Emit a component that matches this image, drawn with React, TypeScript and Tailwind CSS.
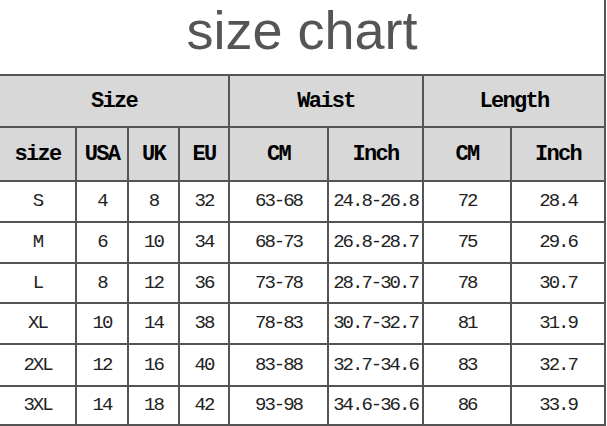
const rows = [
  ['S', '4', '8', '32', '63-68', '24.8-26.8', '72', '28.4'],
  ['M', '6', '10', '34', '68-73', '26.8-28.7', '75', '29.6'],
  ['L', '8', '12', '36', '73-78', '28.7-30.7', '78', '30.7'],
  ['XL', '10', '14', '38', '78-83', '30.7-32.7', '81', '31.9'],
  ['2XL', '12', '16', '40', '83-88', '32.7-34.6', '83', '32.7'],
  ['3XL', '14', '18', '42', '93-98', '34.6-36.6', '86', '33.9'],
];

const rowHeights = ['h-[41px]', 'h-[41px]', 'h-[40px]', 'h-[41px]', 'h-[42px]', 'h-[39px]'];

const widths = [76, 52, 51, 50, 99, 95, 88, 94];

const headCell = 'border-2 border-[#555] text-center align-middle text-[22px] font-bold tracking-[-1.7px] text-black';
const dataCell = 'border-2 border-[#555] text-center align-middle text-[19px] tracking-[-2px] text-[#222]';

const App = () => {
  return (
    <div className="w-[607px] h-[426px] bg-white overflow-hidden">
      <div className="w-[606px] h-[74px] border-r-2 border-[#555] pt-[1px]">
        <div className="text-center text-[54px] leading-[58px] text-[#555] font-['Liberation_Sans',Arial,sans-serif]">
          size chart
        </div>
      </div>
      <table className="w-[606px] table-fixed border-collapse font-['Liberation_Mono',monospace]">
        <colgroup>
          {widths.map((w, i) => (
            <col key={i} style={{ width: w }} />
          ))}
        </colgroup>
        <tbody>
          <tr className="h-[52px] bg-[#d8d8d8]">
            <td colSpan={4} className={`${headCell} border-l-0`}>Size</td>
            <td colSpan={2} className={headCell}>Waist</td>
            <td colSpan={2} className={headCell}>Length</td>
          </tr>
          <tr className="h-[54px] bg-[#d8d8d8]">
            {['size', 'USA', 'UK', 'EU', 'CM', 'Inch', 'CM', 'Inch'].map((h, i) => (
              <td key={i} className={`${headCell} ${i === 0 ? 'border-l-0' : ''}`}>{h}</td>
            ))}
          </tr>
          {rows.map((r, ri) => (
            <tr key={ri} className={rowHeights[ri]}>
              {r.map((c, ci) => (
                <td key={ci} className={`${dataCell} ${ci === 0 ? 'border-l-0' : ''}`}>{c}</td>
              ))}
            </tr>
          ))}
        </tbody>
      </table>
    </div>
  );
};

export default App;
